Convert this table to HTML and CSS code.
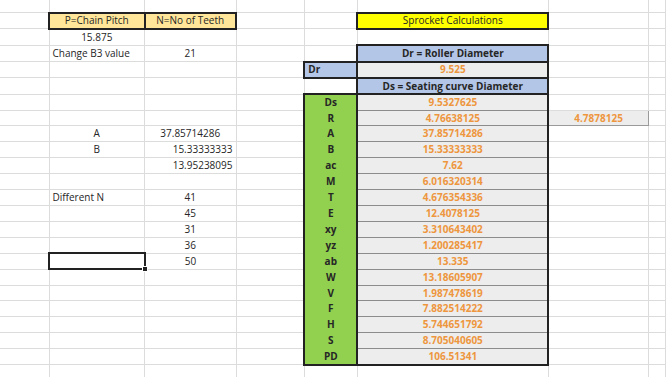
FILE: index.html
```html
<!DOCTYPE html>
<html>
<head>
<meta charset="utf-8">
<link rel="stylesheet" href="styles.css">
</head>
<body>
<table class="sheet">
<colgroup>
<col class="ca"><col class="cb"><col class="cc"><col class="cd"><col class="ce"><col class="cf"><col class="cg"><col class="ch">
</colgroup>
<tbody>
<tr class="r0"><td></td><td></td><td></td><td></td><td></td><td></td><td></td><td></td></tr>
<tr class="rt"><td></td><td class="hdr">P=Chain Pitch</td><td class="hdr">N=No of Teeth</td><td></td><td></td><td class="title">Sprocket Calculations</td><td></td><td></td></tr>
<tr class="rt"><td></td><td class="c">15.875</td><td></td><td></td><td></td><td></td><td></td><td></td></tr>
<tr class="rt"><td></td><td class="l">Change B3 value</td><td class="c">21</td><td></td><td></td><td class="blue">Dr = Roller Diameter</td><td></td><td></td></tr>
<tr class="rt"><td></td><td></td><td></td><td></td><td class="blue l">Dr</td><td class="val single">9.525</td><td></td><td></td></tr>
<tr class="rt"><td></td><td></td><td></td><td></td><td></td><td class="blue">Ds = Seating curve Diameter</td><td></td><td></td></tr>
<tr class="rs"><td></td><td></td><td></td><td></td><td class="lab first">Ds</td><td class="val first">9.5327625</td><td></td><td></td></tr>
<tr class="rs"><td></td><td></td><td></td><td></td><td class="lab">R</td><td class="val">4.76638125</td><td class="extra">4.7878125</td><td></td></tr>
<tr class="rs"><td></td><td class="c">A</td><td class="c">37.85714286</td><td></td><td class="lab">A</td><td class="val">37.85714286</td><td></td><td></td></tr>
<tr class="rs"><td></td><td class="c">B</td><td class="r">15.33333333</td><td></td><td class="lab">B</td><td class="val">15.33333333</td><td></td><td></td></tr>
<tr class="rs"><td></td><td></td><td class="r">13.95238095</td><td></td><td class="lab">ac</td><td class="val">7.62</td><td></td><td></td></tr>
<tr class="rs"><td></td><td></td><td></td><td></td><td class="lab">M</td><td class="val">6.016320314</td><td></td><td></td></tr>
<tr class="rs"><td></td><td class="l">Different N</td><td class="c">41</td><td></td><td class="lab">T</td><td class="val">4.676354336</td><td></td><td></td></tr>
<tr class="rs"><td></td><td></td><td class="c">45</td><td></td><td class="lab">E</td><td class="val">12.4078125</td><td></td><td></td></tr>
<tr class="rs"><td></td><td></td><td class="c">31</td><td></td><td class="lab">xy</td><td class="val">3.310643402</td><td></td><td></td></tr>
<tr class="rs"><td></td><td></td><td class="c">36</td><td></td><td class="lab">yz</td><td class="val">1.200285417</td><td></td><td></td></tr>
<tr class="rs"><td></td><td class="sel"><span class="handle"></span></td><td class="c">50</td><td></td><td class="lab">ab</td><td class="val">13.335</td><td></td><td></td></tr>
<tr class="rs"><td></td><td></td><td></td><td></td><td class="lab">W</td><td class="val">13.18605907</td><td></td><td></td></tr>
<tr class="rs"><td></td><td></td><td></td><td></td><td class="lab">V</td><td class="val">1.987478619</td><td></td><td></td></tr>
<tr class="rs"><td></td><td></td><td></td><td></td><td class="lab">F</td><td class="val">7.882514222</td><td></td><td></td></tr>
<tr class="rs"><td></td><td></td><td></td><td></td><td class="lab">H</td><td class="val">5.744651792</td><td></td><td></td></tr>
<tr class="rs"><td></td><td></td><td></td><td></td><td class="lab">S</td><td class="val">8.705040605</td><td></td><td></td></tr>
<tr class="rs"><td></td><td></td><td></td><td></td><td class="lab last">PD</td><td class="val last">106.51341</td><td></td><td></td></tr>
<tr class="rs"><td></td><td></td><td></td><td></td><td></td><td></td><td></td><td></td></tr>
</tbody>
</table>
</body>
</html>
```

FILE: styles.css
```css
html, body {
  margin: 0;
  padding: 0;
  background: #ffffff;
  overflow: hidden;
}

.sheet {
  width: 666px;
  table-layout: fixed;
  border-collapse: collapse;
  font-family: "Open Sans", "Liberation Sans", sans-serif;
  font-size: 10px;
  color: #262626;
}

.ca { width: 49px; }
.cb { width: 95.5px; }
.cc { width: 91.5px; }
.cd { width: 68.3px; }
.ce { width: 53px; }
.cf { width: 191px; }
.cg { width: 100px; }
.ch { width: 17.7px; }

.sheet td {
  border: 1px solid #dcdcdc;
  border-top: none;
  border-left: none;
  padding: 0 3px;
  line-height: 11px;
  white-space: nowrap;
  overflow: visible;
  vertical-align: middle;
  text-align: center;
}

.r0 { height: 12.7px; }
.rt { height: 16.3px; }
.rs { height: 15.92px; }

.c { text-align: center; }
.l { text-align: left !important; }
.r { text-align: right !important; }

.hdr {
  background: #ffe699;
  border: 2px solid #222 !important;
}

.title {
  background: #ffff00;
  border: 2px solid #222 !important;
}

.blue {
  background: #b4c6e7;
  font-weight: bold;
  border: 2px solid #222 !important;
}

.val {
  background: #ededed;
  color: #ee963e;
  font-weight: bold;
  border-left: 2px solid #222 !important;
  border-right: 2px solid #222 !important;
  border-top: 1px solid #8c8c8c !important;
  border-bottom: 1px solid #8c8c8c !important;
}

.val.single,
.val.first { border-top: 2px solid #222 !important; }
.val.single,
.val.last { border-bottom: 2px solid #222 !important; }

.lab {
  background: #92d050;
  font-weight: bold;
  border-left: 2px solid #222 !important;
  border-right: 2px solid #222 !important;
  border-top: none !important;
  border-bottom: none !important;
}

.lab.first { border-top: 2px solid #222 !important; }
.lab.last { border-bottom: 2px solid #222 !important; }

.extra {
  background: #ededed;
  color: #ee963e;
  font-weight: bold;
  border: 1px solid #9a9a9a !important;
}

.sel {
  position: relative;
  border: 2px solid #222 !important;
}

.handle {
  position: absolute;
  right: -4px;
  bottom: -4px;
  width: 4px;
  height: 4px;
  background: #222;
  border: 1px solid #fff;
}
```
